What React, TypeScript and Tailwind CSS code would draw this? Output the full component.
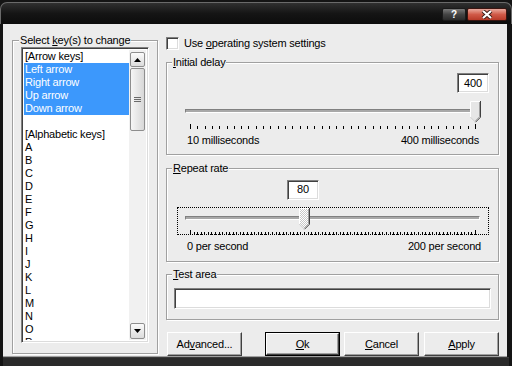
import React from "react";

const sunken =
  "border border-t-[#808080] border-l-[#808080] border-r-white border-b-white shadow-[inset_1px_1px_0_#404040,inset_-1px_-1px_0_#dcdcdc]";
const raised =
  "border border-t-white border-l-white border-r-[#404040] border-b-[#404040] shadow-[inset_-1px_-1px_0_#a0a0a0]";

const keys = [
  "[Arrow keys]",
  "Left arrow",
  "Right arrow",
  "Up arrow",
  "Down arrow",
  "",
  "[Alphabetic keys]",
  ..."ABCDEFGHIJKLMNOP".split(""),
];
const selected = [1, 2, 3, 4];

function GroupBox({
  label,
  className = "",
  legendClass = "ml-[5px]",
  children,
}: {
  label: React.ReactNode;
  className?: string;
  legendClass?: string;
  children?: React.ReactNode;
}) {
  return (
    <fieldset
      className={`border border-[#a0a0a0] shadow-[inset_1px_1px_0_#fff,1px_1px_0_#fff] ${className}`}
    >
      <legend className={`px-[1px] leading-[13px] bg-[#ececec] ${legendClass}`}>{label}</legend>
      {children}
    </fieldset>
  );
}

function Thumb({ left, focused }: { left: number; focused?: boolean }) {
  return (
    <svg
      width="11"
      height="22"
      viewBox="0 0 11 22"
      className="absolute top-0"
      style={{ left }}
    >
      <defs>
        <pattern id="dither" width="2" height="2" patternUnits="userSpaceOnUse">
          <rect width="2" height="2" fill="#ffffff" />
          <rect width="1" height="1" fill="#c8c8c8" />
          <rect x="1" y="1" width="1" height="1" fill="#c8c8c8" />
        </pattern>
      </defs>
      <path d="M0 0 H11 V16 L5.5 21.5 L0 16 Z" fill={focused ? "url(#dither)" : "#e6e6e6"} />
      <path d="M0.5 16 V0.5 H10" stroke="#ffffff" fill="none" />
      <path d="M10.5 0 V16.2 L5.5 21.2" stroke="#404040" fill="none" />
      <path d="M9.5 1 V15.8 L5.5 19.8" stroke="#a0a0a0" fill="none" />
      <path d="M0.5 16.2 L5.2 20.9" stroke="#d0d0d0" fill="none" />
    </svg>
  );
}

function TrackBar({
  value,
  min,
  max,
  ticks,
  focused,
  tickMt,
}: {
  value: number;
  min: number;
  max: number;
  ticks: number;
  focused?: boolean;
  tickMt: string;
}) {
  const frac = (value - min) / (max - min);
  const span = 285;
  const marks = Array.from({ length: ticks + 1 }, (_, i) => Math.round(12 + (i * span) / ticks) + 0.5);
  return (
    <div
      className={`relative h-[28px] ml-[10px] mr-[9px] border ${
        focused ? "border-dotted border-black" : "border-transparent"
      }`}
    >
      <div className="mt-[8px] ml-[7px] mr-[8px] h-[4px] border border-t-[#808080] border-l-[#808080] border-r-white border-b-white bg-[#a8a8a8]" />
      <svg width="310" height="5" className={`block ${tickMt}`}>
        {marks.map((x, i) => (
          <line
            key={i}
            x1={x}
            x2={x}
            y1={i === 0 || i === ticks ? 0 : 2}
            y2={5}
            stroke="#000"
            strokeWidth="1"
          />
        ))}
      </svg>
      <Thumb left={7 + frac * span} focused={focused} />
    </div>
  );
}

function ValueBox({ value, center }: { value: number; center: number }) {
  const left = Math.min(center - 17, 290);
  return (
    <div
      className={`w-[32px] h-[20px] bg-white ${sunken} flex items-center justify-center`}
      style={{ marginLeft: left }}
    >
      {value}
    </div>
  );
}

function Button({ children, isDefault }: { children: React.ReactNode; isDefault?: boolean }) {
  if (isDefault) {
    return (
      <div className="w-[75px] h-[24px] border border-black">
        <div className={`h-full ${raised} flex items-center justify-center`}>{children}</div>
      </div>
    );
  }
  return (
    <div className={`w-[75px] h-[24px] ${raised} flex items-center justify-center`}>{children}</div>
  );
}

export default function App() {
  const initial = 400;
  const rate = 80;
  return (
    <div className="w-[512px] h-[366px] bg-[#141414] flex flex-col text-[11px] leading-[13px] tracking-[-0.2px] text-black font-['Liberation_Sans',Arial,sans-serif] overflow-hidden">
      {/* title bar */}
      <div className="h-[22px] shrink-0 mt-[2px] rounded-t-[7px] border-t border-x border-[#6a6a6a] bg-gradient-to-b from-[#303030] via-[#151515] to-[#0c0c0c] flex justify-end items-start pt-[5px] pr-[4px] gap-[1px]">
        <div className="w-[24px] h-[13px] rounded-[2px] border border-[#1a1a1a] bg-gradient-to-b from-[#7a7a7a] via-[#444444] to-[#2a2a2a] flex items-center justify-center text-white font-bold text-[10px] leading-[10px]">
          ?
        </div>
        <div className="w-[40px] h-[13px] rounded-[2px] border border-[#3a1510] bg-gradient-to-b from-[#e8a89c] via-[#d05a48] to-[#b83a28] flex items-center justify-center">
          <svg width="12" height="9" viewBox="0 0 12 9">
            <path d="M2 1 L10 8 M10 1 L2 8" stroke="#3a1a14" strokeWidth="4" />
            <path d="M2 1 L10 8 M10 1 L2 8" stroke="#ffffff" strokeWidth="2.2" />
          </svg>
        </div>
      </div>

      {/* client */}
      <div className="h-[333px] shrink-0 ml-[3px] mr-[5px] bg-[#ececec] flex pl-[9px] pt-[10px] gap-[8px] border-b border-[#a0a0a0]">
        <GroupBox
          label={
            <>
              Select <u>k</u>ey(s) to change
            </>
          }
          legendClass="ml-[6px]"
          className="w-[146px] h-[320px] shrink-0"
        >
          <div className={`mx-[8px] h-[296px] bg-white ${sunken} p-[2px] flex overflow-hidden`}>
            <div className="flex-1 flex flex-col overflow-hidden">
              {keys.map((k, i) => (
                <div
                  key={i}
                  className={`h-[13px] shrink-0 pl-[1px] whitespace-nowrap ${
                    selected.includes(i) ? "bg-[#3c98fc] text-white" : ""
                  }`}
                >
                  {k}
                </div>
              ))}
            </div>
            <div className="w-[17px] shrink-0 bg-[#f1f1f1] flex flex-col p-[1px] pt-[2px]">
              <div className="h-[15px] rounded-[2px] border border-[#8e8e8e] bg-gradient-to-b from-[#fbfbfb] to-[#dcdcdc] flex items-center justify-center">
                <svg width="7" height="4" viewBox="0 0 7 4">
                  <path d="M0 4 L3.5 0 L7 4 Z" fill="#000" />
                </svg>
              </div>
              <div className="mt-[1px] h-[63px] rounded-[2px] border border-[#8e8e8e] bg-gradient-to-r from-[#f6f6f6] to-[#d8d8d8] flex flex-col items-center justify-center gap-[1px]">
                <div className="w-[7px] h-[1px] bg-[#6a6a6a]" />
                <div className="w-[7px] h-[1px] bg-[#6a6a6a]" />
                <div className="w-[7px] h-[1px] bg-[#6a6a6a]" />
              </div>
              <div className="flex-1" />
              <div className="h-[16px] rounded-[2px] border border-[#8e8e8e] bg-gradient-to-b from-[#fbfbfb] to-[#dcdcdc] flex items-center justify-center">
                <svg width="7" height="4" viewBox="0 0 7 4">
                  <path d="M0 0 L3.5 4 L7 0 Z" fill="#000" />
                </svg>
              </div>
            </div>
          </div>
        </GroupBox>

        <div className="w-[333px] shrink-0 flex flex-col pt-[3px]">
          <div className="h-[13px] flex items-center gap-[5px]">
            <div className={`w-[13px] h-[13px] bg-white ${sunken}`} />
            <span>
              Use <u>o</u>perating system settings
            </span>
          </div>

          <GroupBox label={<><u>I</u>nitial delay</>} className="mt-[6px] h-[99px]">
            <div className="mt-[4px] flex">
              <ValueBox value={initial} center={1 + 12 + 10 + 285 * ((initial - 10) / 390)} />
            </div>
            <div className="mt-[7px]">
              <TrackBar value={initial} min={10} max={400} ticks={39} tickMt="mt-[11px]" />
            </div>
            <div className="mt-[6px] flex justify-between pl-[20px] pr-[19px]">
              <span>10 milliseconds</span>
              <span>400 milliseconds</span>
            </div>
          </GroupBox>

          <GroupBox label={<><u>R</u>epeat rate</>} className="mt-[7px] h-[101px]">
            <div className="mt-[5px] flex">
              <ValueBox value={rate} center={1 + 12 + 10 + 285 * (rate / 200)} />
            </div>
            <div className="mt-[7px]">
              <TrackBar value={rate} min={0} max={200} ticks={80} focused tickMt="mt-[10px]" />
            </div>
            <div className="mt-[5px] flex justify-between pl-[20px] pr-[17px]">
              <span>0 per second</span>
              <span>200 per second</span>
            </div>
          </GroupBox>

          <GroupBox label={<><u>T</u>est area</>} className="mt-[6px] h-[52px]">
            <div className={`mt-[7px] mx-[7px] h-[21px] bg-white ${sunken}`} />
          </GroupBox>

          <div className="mt-[12px] flex items-center pl-[1px]">
            <Button>
              Ad<u>v</u>anced...
            </Button>
            <div className="ml-auto flex gap-[4px]">
              <Button isDefault>
                <u>O</u>k
              </Button>
              <Button>
                <u>C</u>ancel
              </Button>
              <div className="ml-[1px]">
                <Button>
                  <u>A</u>pply
                </Button>
              </div>
            </div>
          </div>
        </div>
      </div>
      <div className="flex-1 mx-[3px] border-t border-[#3a3a3a] bg-[#2a2a2a]" />
    </div>
  );
}
